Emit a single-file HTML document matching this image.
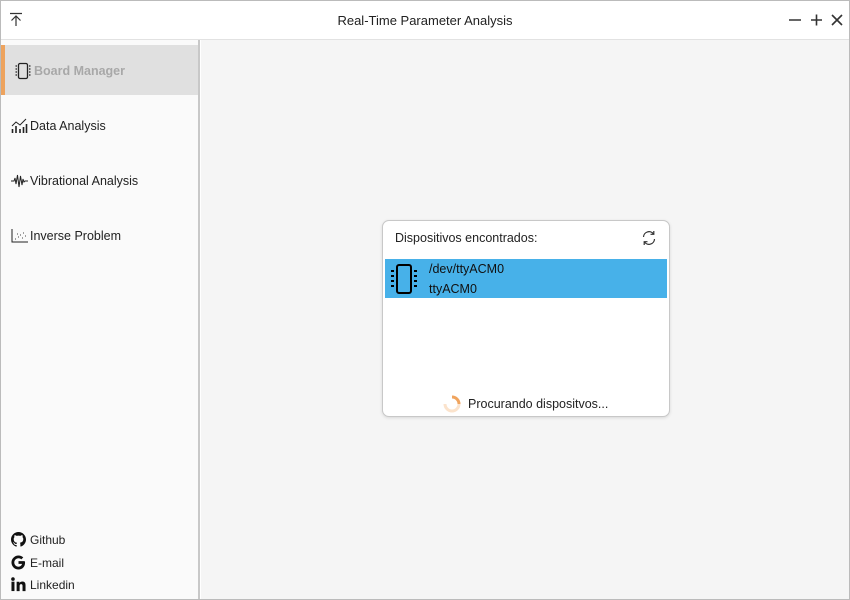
<!DOCTYPE html>
<html><head><style>
*{margin:0;padding:0;box-sizing:border-box}
body{width:850px;height:600px;overflow:hidden;background:#fff;font-family:"Liberation Sans",sans-serif;font-size:12.5px;color:#222;position:relative}
.frame{position:absolute;left:0;top:0;width:850px;height:600px;border:1px solid #bbb}
.title{position:absolute;top:0;left:0;width:850px;height:40px;background:#fff;border-bottom:1px solid #e2e2e2}
.title .t{position:absolute;left:0;width:850px;top:13px;text-align:center;font-size:13px;color:#222}
.side{position:absolute;left:1px;top:40px;width:199px;height:559px;background:#fafafa;border-right:2px solid #c8c8c8}
.main{position:absolute;left:201px;top:40px;width:648px;height:559px;background:#f5f5f5}
.item{position:absolute;left:0;width:197px;height:50px;display:flex;align-items:center;padding-left:10px;gap:2px;padding-top:2px}
.item svg{flex:none}
.sel{background:#e0e0e0;border-left:4px solid #eda35e;color:#a8a8a8;font-weight:bold;padding-left:9px}
.foot{position:absolute;left:10px;display:flex;align-items:center;gap:4px;font-size:12px}
.card{position:absolute;left:382px;top:220px;width:288px;height:197px;background:#fff;border:1px solid #c8c8c8;border-radius:7px;box-shadow:0 1px 3px rgba(0,0,0,.12)}
.row{position:absolute;left:2px;top:38px;width:282px;height:39px;background:#47b1e9}
</style></head><body>
<div class="title">
<svg style="position:absolute;left:9px;top:12px" width="14" height="15" viewBox="0 0 14 15"><path d="M1 1.5H13M7 4V14M2.5 8.5L7 4L11.5 8.5" stroke="#333" stroke-width="1.2" fill="none"/></svg>
<div class="t">Real-Time Parameter Analysis</div>
<svg style="position:absolute;left:788px;top:14px" width="56" height="12" viewBox="0 0 56 12"><path d="M1 6H13M23 6H34M28.5 0.5V11.5M44 1L54 11M54 1L44 11" stroke="#333" stroke-width="1.6" fill="none"/></svg>
</div>
<div class="side">
<div class="item sel" style="top:5px"><svg width="18" height="18" viewBox="0 0 18 18"><rect x="4.5" y="1.5" width="9" height="15" rx="1.5" stroke="#222" stroke-width="1.3" fill="none"/><path d="M1.5 4H3M1.5 7H3M1.5 10H3M1.5 13H3M15 4H16.5M15 7H16.5M15 10H16.5M15 13H16.5" stroke="#222" stroke-width="1.3"/></svg><span>Board Manager</span></div>
<div class="item" style="top:60px"><svg width="17" height="16" viewBox="0 0 17 16"><path d="M1 8L5 4L9 7L15 1" stroke="#222" fill="none"/><path d="M1.5 11V15M5 8V15M9 11V15M12.5 9V15M15.5 6V15" stroke="#222" stroke-width="1.6"/></svg><span>Data Analysis</span></div>
<div class="item" style="top:115px"><svg width="17" height="14" viewBox="0 0 17 14"><path d="M0 7H3L4 4L5 10L6.5 1L8 13L9.5 2L11 11L12 5L13 8L14 7H17" stroke="#222" fill="none"/></svg><span>Vibrational Analysis</span></div>
<div class="item" style="top:170px"><svg width="17" height="14" viewBox="0 0 17 14"><path d="M1 0V13H17" stroke="#222" fill="none"/><path d="M4 10h1M7 8h1M9 6h1M12 4h1M14 7h1M11 9h1M6 5h1" stroke="#444"/></svg><span>Inverse Problem</span></div>
<div class="foot" style="top:492px"><svg width="15" height="15" viewBox="0 0 16 16"><path d="M8 0C3.6 0 0 3.6 0 8c0 3.5 2.3 6.5 5.5 7.6.4.1.5-.2.5-.4v-1.4c-2.2.5-2.7-1-2.7-1-.4-.9-.9-1.2-.9-1.2-.7-.5.1-.5.1-.5.8.1 1.200.8 1.2.8.7 1.3 1.900.9 2.300.7.1-.5.3-.9.5-1.1-1.8-.2-3.6-.9-3.6-4 0-.9.3-1.600.8-2.100-.1-.2-.4-1 .1-2.100 0 0 .7-.2 2.2.8.6-.2 1.300-.3 2-.3s1.400.1 2 .3c1.500-1 2.200-.8 2.200-.8.4 1.100.2 1.900.1 2.100.5.6.8 1.300.8 2.100 0 3.100-1.900 3.700-3.600 3.900.3.3.5.8.5 1.500v2.200c0 .2.1.5.6.4C13.700 14.500 16 11.500 16 8c0-4.400-3.600-8-8-8z" fill="#111"/></svg>Github</div>
<div class="foot" style="top:515px"><svg width="15" height="15" viewBox="0 0 16 16"><path d="M14.5 6.5H8V9.5H11.8C11.3 11.3 9.8 12.5 8 12.5C5.5 12.5 3.5 10.5 3.5 8S5.5 3.5 8 3.5C9.2 3.5 10.2 3.9 11 4.6L13.1 2.5C11.7 1.2 9.9 0.5 8 0.5C3.9 0.5 0.5 3.9 0.5 8S3.9 15.5 8 15.5C12 15.5 15 12.7 15 8C15 7.5 14.9 7 14.5 6.5Z" fill="#111"/></svg>E-mail</div>
<div class="foot" style="top:537px"><svg width="15" height="15" viewBox="0 0 16 16"><rect x="0.5" y="5" width="3.2" height="10" fill="#111"/><circle cx="2.1" cy="2.2" r="1.9" fill="#111"/><path d="M6 5H9V6.5C9.6 5.4 10.8 4.8 12.2 4.8C14.6 4.8 15.5 6.3 15.5 8.8V15H12.3V9.5C12.3 8.3 11.9 7.6 10.8 7.6C9.7 7.6 9.2 8.4 9.2 9.5V15H6Z" fill="#111"/></svg>Linkedin</div>
</div>
<div class="main"></div>
<div class="card">
<div style="position:absolute;left:12px;top:10px;font-size:12.5px">Dispositivos encontrados:</div>
<svg style="position:absolute;left:258px;top:9px" width="16" height="16" viewBox="0 0 16 16"><path d="M2.5 7A5.5 5.5 0 0 1 12.5 4M13.5 9A5.5 5.5 0 0 1 3.5 12" stroke="#333" stroke-width="1.2" fill="none"/><path d="M12.8 1V4.3H9.5M3.2 15V11.7H6.5" stroke="#333" stroke-width="1.2" fill="none"/></svg>
<div class="row">
<svg style="position:absolute;left:3px;top:4px" width="32" height="32" viewBox="0 0 32 32"><rect x="9" y="2" width="14" height="28" rx="2" stroke="#000" stroke-width="2" fill="none"/><path d="M3 8H6M3 13H6M3 18H6M3 23H6M26 8H29M26 13H29M26 18H29M26 23H29" stroke="#000" stroke-width="2"/></svg>
<div style="position:absolute;left:44px;top:3px;color:#111">/dev/ttyACM0</div>
<div style="position:absolute;left:44px;top:23px;color:#111">ttyACM0</div>
</div>
<svg style="position:absolute;left:60px;top:174px" width="18" height="18" viewBox="0 0 18 18"><path d="M9 2A7 7 0 0 1 16 9" stroke="#f0a45e" stroke-width="3" fill="none"/><path d="M16 9A7 7 0 0 1 9 16A7 7 0 0 1 2 9" stroke="#fbe3cc" stroke-width="3" fill="none"/></svg>
<div style="position:absolute;left:85px;top:176px">Procurando dispositvos...</div>
</div>
<div class="frame"></div>
</body></html>
